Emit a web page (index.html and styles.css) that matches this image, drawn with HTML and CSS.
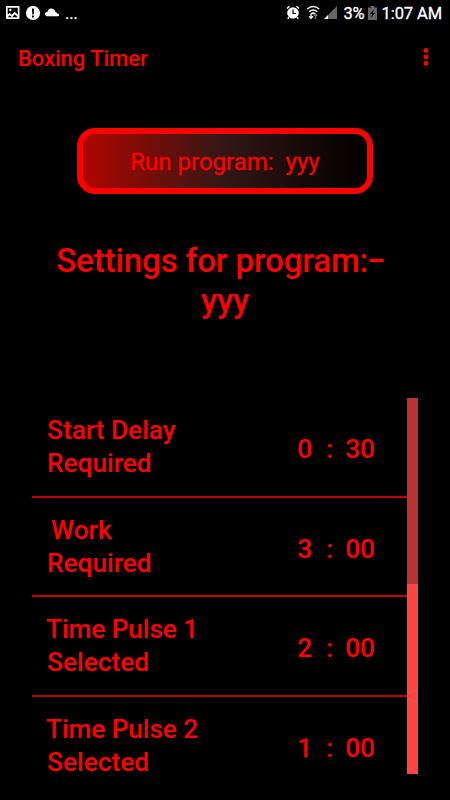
FILE: index.html
```html
<!DOCTYPE html>
<html lang="en">
<head>
<meta charset="utf-8">
<title>Boxing Timer</title>
<link rel="stylesheet" href="styles.css">
</head>
<body>
<div class="status">
  <div class="status-left">
    <svg width="56" height="16" viewBox="0 0 56 16">
      <path fill="#fff" fill-rule="evenodd" d="M.5 0h12q1 0 1 1v11q0 1-1 1H1q-1 0-1-1V1zM1.7 1.7v7l2-2 2 2 3-3 3.1 3V1.7zM1.7 11.2h10.1l-3-3-2.7 3-2.3-2z"/>
      <circle cx="4.3" cy="4" r="1.2" fill="#fff"/>
      <circle cx="27" cy="7" r="7.1" fill="#fff"/>
      <path d="M25.9 2.6h2.2l-.4 5.8h-1.4zM26 9.6h2v2h-2z" fill="#000"/>
      <path d="M41 10.3q-2.2-.2-2.2-2.2t2.8-2.3Q42.3 2.5 45.4 2.5t4 3.5q1.6.2 1.8 1.6 2 .1 2 1.4t-1.6 1.3z" fill="#fff"/>
    </svg>
    <span class="ellipsis">...</span>
  </div>
  <div class="status-right">
    <svg class="signals" width="53" height="16" viewBox="0 0 53 16">
      <circle cx="7" cy="8" r="5.8" fill="#fff"/>
      <path d="M1 3.5 3.5 1.3M10.5 1.3 13 3.5M3 12.2l-1.3 1.5M11 12.2l1.3 1.5" stroke="#fff" stroke-width="1.5" fill="none"/>
      <path d="M7 4.5v4h3" stroke="#000" stroke-width="1.2" fill="none"/>
      <path d="M21.2 4q6-5 12 0M23.2 6.6q4-3.3 8 0M25.2 9q2-1.7 4 0" stroke="#fff" stroke-width="1.5" fill="none"/>
      <path d="M25 8.5v5.2M23 11.2l2 2.2 2-2.2" stroke="#fff" stroke-width="1.3" fill="none"/>
      <path d="M29.5 14V9M27.8 10.8l1.7-1.8 1.7 1.8" stroke="#777" stroke-width="1.3" fill="none"/>
      <path d="M51 1v13H38z" fill="#666"/><path d="M42 10v4h-4z" fill="#fff"/>
    </svg>
    <span class="percent">3%</span>
    <svg class="battery" width="9" height="14" viewBox="0 0 9 14">
      <path d="M2.7 0h3.6v1.5H9V14H0V1.5h2.7z" fill="#666"/><path d="M5.8 3.4 2 8h2l-.8 3.8L7 7H5z" fill="#000"/>
    </svg>
    <span class="clock">1:07 AM</span>
  </div>
</div>
<header class="appbar">
  <h1 class="title">Boxing Timer</h1>
  <svg width="8" height="20" viewBox="0 0 8 20" fill="#f00"><circle cx="4" cy="2.4" r="2.4"/><circle cx="4" cy="8.9" r="2.4"/><circle cx="4" cy="15.4" r="2.4"/></svg>
</header>
<button class="run">Run program:&nbsp; yyy</button>
<h2 class="heading">Settings for program:<span class="dash">−</span>&nbsp;<br>yyy</h2>
<main class="panel">
  <div class="rows">
    <div class="row"><div class="label">Start Delay<br>Required</div><div class="time"><span>0</span><span>:</span><span>30</span></div></div>
    <div class="row"><div class="label"><span class="indent">Work</span><br>Required</div><div class="time"><span>3</span><span>:</span><span>00</span></div></div>
    <div class="row"><div class="label"><span class="pulse">Time Pulse 1</span><br>Selected</div><div class="time"><span>2</span><span>:</span><span>00</span></div></div>
    <div class="row"><div class="label"><span class="pulse">Time Pulse 2</span><br>Selected</div><div class="time"><span>1</span><span>:</span><span>00</span></div></div>
  </div>
  <div class="scrollbar"><div class="thumb"></div></div>
</main>
</body>
</html>
```
FILE: styles.css
```css
* { box-sizing: border-box; }
body {
  margin: 0;
  width: 450px;
  height: 800px;
  overflow: hidden;
  background: #000;
  color: #f00;
  font-family: Roboto, sans-serif;
  font-weight: 500;
}
.status {
  height: 27px;
  padding: 0 8px 0 6px;
  display: flex;
  justify-content: space-between;
  color: #fff;
  font-size: 16.5px;
  font-weight: 400;
  line-height: 27px;
  letter-spacing: -0.1px;
  -webkit-text-stroke: 0.3px #fff;
}
.status svg { -webkit-text-stroke: 0; }
.status-left, .status-right { display: flex; }
.status-left svg { margin-top: 6px; }
.ellipsis { margin-left: 3px; line-height: 28px; }
.signals { margin-top: 5px; }
.percent { margin-left: 4px; }
.battery { margin: 6px 5px 0 3px; }
.appbar {
  height: 62px;
  padding: 0 20px 0 18px;
  display: flex;
  align-items: center;
  justify-content: space-between;
}
.title {
  margin: 0;
  font-size: 22px;
  font-weight: 500;
  letter-spacing: -0.05px;
}
.run {
  display: block;
  width: 296px;
  height: 66px;
  margin: 39px auto 0 77px;
  padding: 2px 0 0;
  border: 6px solid #f00;
  border-radius: 18px;
  background: linear-gradient(90deg, #b00500, #321714 50%, #000);
  background-origin: padding-box;
  color: #f00;
  font: 400 24px Roboto, sans-serif;
  -webkit-text-stroke: 0.3px #f00;
}
.heading {
  height: 80px;
  margin: 47px 0 0;
  text-align: center;
  font-size: 33px;
  font-weight: 500;
  line-height: 39.5px;
  letter-spacing: -0.1px;
}
.dash { margin-left: -1px; }
.panel {
  height: 376px;
  margin: 77px 32px 0;
  display: flex;
}
.rows { flex: 1; }
.row {
  height: 99.7px;
  padding: 16px 32px 0 15px;
  display: flex;
  justify-content: space-between;
  border-bottom: 2px solid #c40000;
  font-size: 26.25px;
}
.row:last-child { border-bottom: 0; }
.label { line-height: 33px; }
.indent { padding-left: 4px; }
.pulse { margin-left: -1px; letter-spacing: -0.1px; }
.time {
  display: grid;
  grid-template-columns: 29px 19px auto;
  line-height: 33px;
  padding-top: 19px;
}
.scrollbar { width: 11px; background: #b83232; }
.thumb { height: 190px; margin-top: 186px; background: #ff4444; }
```
